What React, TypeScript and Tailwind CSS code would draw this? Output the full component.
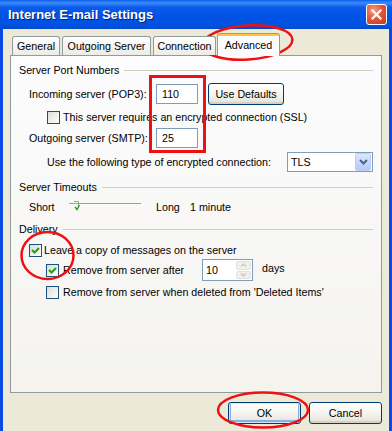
import React from "react";

function Check({ checked }: { checked?: boolean }) {
  return (
    <div className="w-[13px] h-[13px] shrink-0 border border-[#1C5180] bg-gradient-to-br from-[#DCDCD7] to-[#FFFFFF] flex items-center justify-center">
      {checked && (
        <svg width="11" height="11" viewBox="0 0 11 11">
          <polyline points="2,5 4.5,7.5 9,3" fill="none" stroke="#21A121" strokeWidth="2.2" />
        </svg>
      )}
    </div>
  );
}

function GroupHeader({ title }: { title: string }) {
  return (
    <div className="h-[14px] flex items-center gap-[5px]">
      <span>{title}</span>
      <div className="flex-1 h-px bg-[#D0D0BF]" />
    </div>
  );
}

function XPButton({ label, def, className = "" }: { label: string; def?: boolean; className?: string }) {
  return (
    <div
      className={`h-[22px] rounded-[3px] border border-[#003C74] bg-gradient-to-b from-[#FFFFFF] via-[#F6F5F0] to-[#E3E0D6] flex items-center justify-center ${
        def ? "shadow-[inset_0_0_0_1px_#CEE7FF,inset_0_-1px_0_2px_#89ADE4]" : "shadow-[inset_0_-2px_0_0_#D6D0C5]"
      } ${className}`}
    >
      {label}
    </div>
  );
}

function TextBox({ value }: { value: string }) {
  return (
    <div className="w-[42px] h-[20px] border border-[#7F9DB9] bg-white flex items-center pl-[5px]">{value}</div>
  );
}

export default function App() {
  return (
    <div className="relative w-[392px] h-[431px] overflow-hidden font-['Liberation_Sans',Arial,sans-serif] text-[10.7px] text-black">
      <div className="flex flex-col h-full">
        {/* title bar */}
        <div className="h-[29px] shrink-0 flex items-center justify-between pl-[8px] pr-[5px] bg-[linear-gradient(to_bottom,#0A5EEF_0%,#3D8CF8_10%,#0B5AEB_25%,#0053E6_60%,#0152E0_88%,#0048CC_100%)]">
          <span className="text-white font-bold text-[13px] [text-shadow:1px_1px_0_#0A1E6E]">Internet E-mail Settings</span>
          <div className="w-[21px] h-[21px] rounded-[3px] border border-white bg-[radial-gradient(circle_at_35%_30%,#F2A28C_0%,#E2583A_45%,#C4391A_100%)] flex items-center justify-center">
            <svg width="13" height="13" viewBox="0 0 13 13">
              <path d="M2.5 2.5 L10.5 10.5 M10.5 2.5 L2.5 10.5" stroke="white" strokeWidth="2.2" strokeLinecap="square" />
            </svg>
          </div>
        </div>

        {/* body */}
        <div className="flex-1 flex flex-col bg-[#ECE9D8] border-x-[3px] border-[#0A4BE6] px-[7px]">
          {/* tabs */}
          <div className="mt-[4px] h-[22px] flex items-end pl-[2px] relative z-10">
            <div className="w-[48px] h-[19px] border border-b-0 border-[#919B9C] rounded-t-[3px] bg-gradient-to-b from-white to-[#ECEBE6] flex items-center justify-center">
              General
            </div>
            <div className="ml-[2px] w-[89px] h-[19px] border border-b-0 border-[#919B9C] rounded-t-[3px] bg-gradient-to-b from-white to-[#ECEBE6] flex items-center justify-center">
              Outgoing Server
            </div>
            <div className="ml-[2px] w-[63px] h-[19px] border border-b-0 border-[#919B9C] rounded-t-[3px] bg-gradient-to-b from-white to-[#ECEBE6] flex items-center justify-center">
              Connection
            </div>
            <div className="ml-[1px] w-[63px] h-[23px] -mb-px border-x border-[#919B9C] rounded-t-[3px] bg-[#FCFCFE] flex flex-col">
              <div className="h-[3px] rounded-t-[2px] bg-[#FFC83C] border-t border-[#E68B2C]" />
              <div className="flex-1 flex items-center justify-center pb-[2px]">Advanced</div>
            </div>
          </div>

          {/* panel */}
          <div className="h-[338px] border border-[#919B9C] bg-gradient-to-b from-[#FCFCFE] to-[#F4F3EE] px-[8px] flex flex-col">
            <div className="mt-[7px]">
              <GroupHeader title="Server Port Numbers" />
            </div>
            <div className="mt-[7px] h-[20px] flex items-center pl-[10px]">
              <span className="w-[127px]">Incoming server (POP3):</span>
              <TextBox value="110" />
              <XPButton label="Use Defaults" className="ml-[10px] w-[76px] h-[21px]" />
            </div>
            <div className="mt-[6px] h-[14px] flex items-center pl-[28px] gap-[3px]">
              <Check />
              <span>This server requires an encrypted connection (SSL)</span>
            </div>
            <div className="mt-[4px] h-[20px] flex items-center pl-[10px]">
              <span className="w-[127px]">Outgoing server (SMTP):</span>
              <TextBox value="25" />
            </div>
            <div className="mt-[4px] h-[20px] flex items-center pl-[28px]">
              <span>Use the following type of encrypted connection:</span>
              <div className="ml-auto w-[86px] h-[20px] border border-[#7F9DB9] bg-white flex items-center pl-[3px] pr-px">
                <span className="flex-1">TLS</span>
                <div className="w-[16px] h-[18px] rounded-[2px] border border-[#B9CDF6] bg-gradient-to-b from-[#DCE7FD] to-[#B4C9F6] flex items-center justify-center">
                  <svg width="9" height="6" viewBox="0 0 9 6">
                    <polyline points="1,1 4.5,4.5 8,1" fill="none" stroke="#4D6185" strokeWidth="2" />
                  </svg>
                </div>
              </div>
            </div>

            <div className="mt-[8px]">
              <GroupHeader title="Server Timeouts" />
            </div>
            <div className="mt-[6px] h-[14px] flex items-center pl-[10px]">
              <span className="w-[40px]">Short</span>
              <div className="relative w-[72px] h-[14px]">
                <div className="absolute left-0 right-0 top-[3px] h-[2px] border-t border-[#9D9C99] border-b border-b-white bg-[#DAD8CF]" />
                <svg className="absolute left-[4px] top-[1px]" width="8" height="11" viewBox="0 0 8 11">
                  <path d="M1 0.5 H5.5 V7" fill="none" stroke="#A5A49C" strokeWidth="1" />
                  <path d="M2 6 L4 8.5 L6.5 4" fill="none" stroke="#21A121" strokeWidth="1.4" />
                </svg>
              </div>
              <span className="ml-[15px] w-[34px]">Long</span>
              <span>1 minute</span>
            </div>

            <div className="mt-[8px]">
              <GroupHeader title="Delivery" />
            </div>
            <div className="mt-[7px] h-[14px] flex items-center pl-[10px] gap-[2px]">
              <Check checked />
              <span>Leave a copy of messages on the server</span>
            </div>
            <div className="mt-[2px] h-[22px] flex items-center pl-[27px]">
              <Check checked />
              <span className="ml-[4px] w-[139px]">Remove from server after</span>
              <div className="w-[51px] h-[22px] border border-[#7F9DB9] bg-white flex items-center pl-[3px] pr-px">
                <span className="flex-1">10</span>
                <div className="w-[15px] h-[18px] flex flex-col gap-px">
                  <div className="flex-1 rounded-[2px] bg-[#F1F0EA] border border-[#E3E2DA] flex items-center justify-center">
                    <svg width="7" height="4" viewBox="0 0 7 4">
                      <polyline points="1,3.5 3.5,1 6,3.5" fill="none" stroke="#C9C7BA" strokeWidth="1.3" />
                    </svg>
                  </div>
                  <div className="flex-1 rounded-[2px] bg-[#F1F0EA] border border-[#E3E2DA] flex items-center justify-center">
                    <svg width="7" height="4" viewBox="0 0 7 4">
                      <polyline points="1,0.5 3.5,3 6,0.5" fill="none" stroke="#C9C7BA" strokeWidth="1.3" />
                    </svg>
                  </div>
                </div>
              </div>
              <span className="ml-[9px] -mt-[3px]">days</span>
            </div>
            <div className="mt-[4px] h-[14px] flex items-center pl-[27px] gap-[4px]">
              <Check />
              <span>Remove from server when deleted from 'Deleted Items'</span>
            </div>
          </div>

          {/* buttons */}
          <div className="mt-[9px] flex justify-end gap-[8px]">
            <XPButton label="OK" def className="w-[73px]" />
            <XPButton label="Cancel" className="w-[73px]" />
          </div>
        </div>
      </div>

      {/* red annotation marks */}
      <svg className="absolute inset-0 pointer-events-none" width="392" height="431" viewBox="0 0 392 431">
        <ellipse cx="247.5" cy="42.5" rx="45" ry="17" fill="none" stroke="#EE1111" strokeWidth="2.5" transform="rotate(-4 247.5 42.5)" />
        <rect x="150.5" y="76.5" width="54" height="75" fill="none" stroke="#EE1111" strokeWidth="3" />
        <ellipse cx="47.5" cy="255.5" rx="26" ry="23.5" fill="none" stroke="#EE1111" strokeWidth="2.5" />
        <ellipse cx="263" cy="410" rx="45" ry="17.5" fill="none" stroke="#EE1111" strokeWidth="2.5" />
      </svg>
    </div>
  );
}
